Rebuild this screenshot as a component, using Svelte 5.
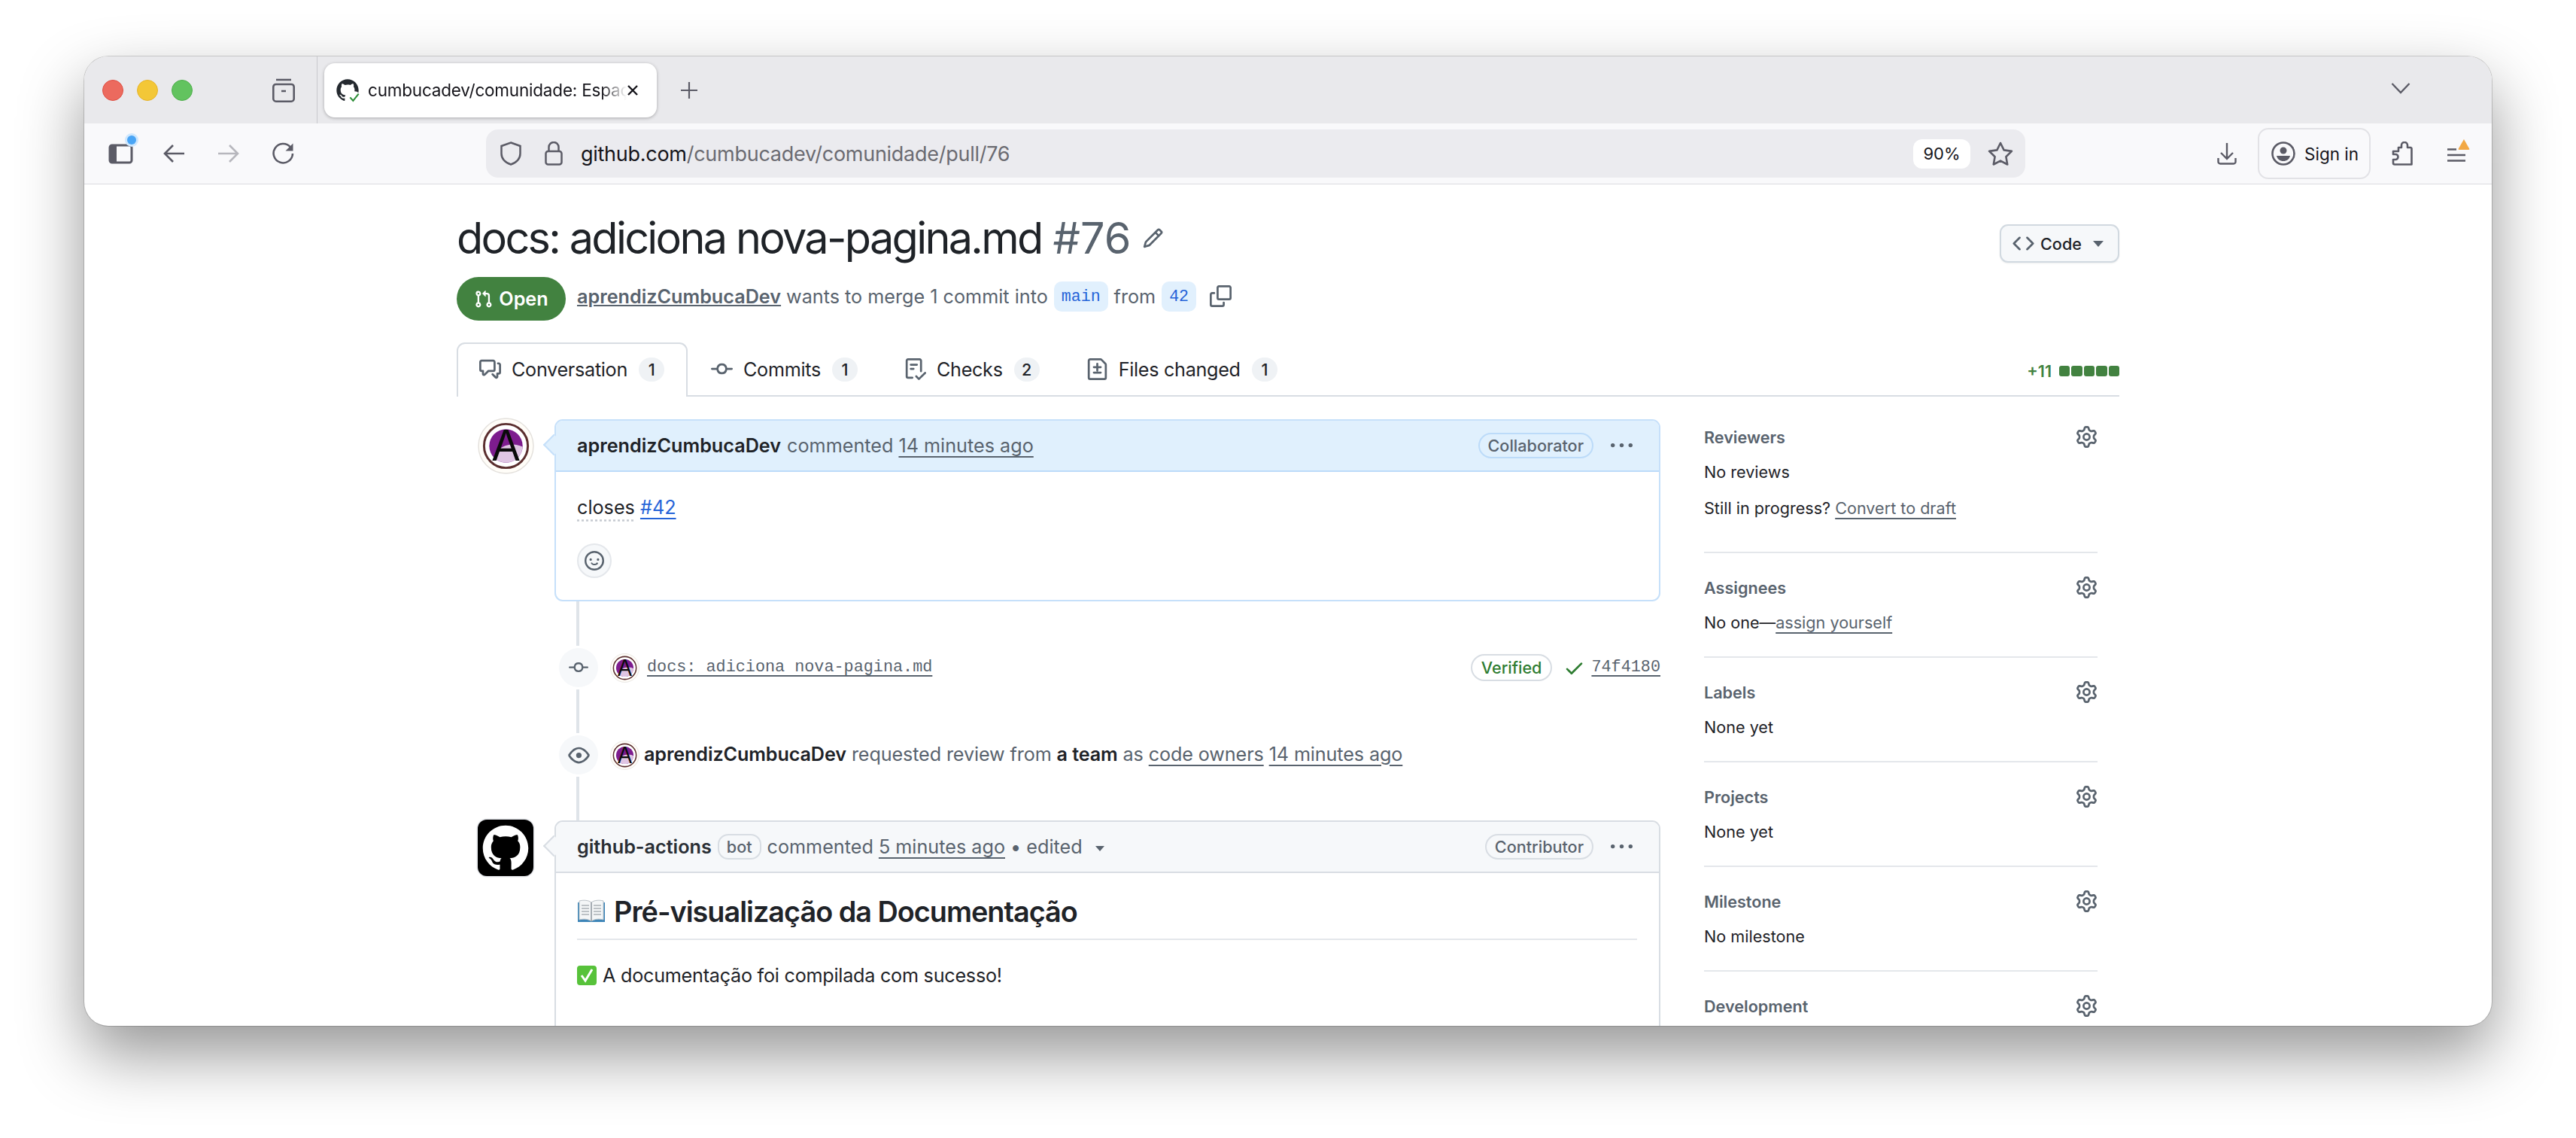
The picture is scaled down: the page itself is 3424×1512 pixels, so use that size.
<script>
	const oct = {
		pr: 'M1.5 3.25a2.25 2.25 0 1 1 3 2.122v5.256a2.251 2.251 0 1 1-1.5 0V5.372A2.25 2.25 0 0 1 1.5 3.25Zm5.677-.177L9.573.677A.25.25 0 0 1 10 .854V2.5h1A2.5 2.5 0 0 1 13.5 5v5.628a2.251 2.251 0 1 1-1.5 0V5a1 1 0 0 0-1-1h-1v1.646a.25.25 0 0 1-.427.177L7.177 3.427a.25.25 0 0 1 0-.354ZM3.75 2.5a.75.75 0 1 0 0 1.5.75.75 0 0 0 0-1.5Zm0 9.5a.75.75 0 1 0 0 1.5.75.75 0 0 0 0-1.5Zm8.25.75a.75.75 0 1 0 1.5 0 .75.75 0 0 0-1.5 0Z',
		discussion: 'M1.75 1h8.5c.966 0 1.75.784 1.75 1.75v5.5A1.75 1.75 0 0 1 10.25 10H7.061l-2.574 2.573A1.458 1.458 0 0 1 2 11.543V10h-.25A1.75 1.75 0 0 1 0 8.25v-5.5C0 1.784.784 1 1.75 1ZM1.5 2.75v5.5c0 .138.112.25.25.25h1a.75.75 0 0 1 .75.75v2.19l2.72-2.72a.749.749 0 0 1 .53-.22h3.5a.25.25 0 0 0 .25-.25v-5.5a.25.25 0 0 0-.25-.25h-8.5a.25.25 0 0 0-.25.25Zm13 2a.25.25 0 0 0-.25-.25h-.5a.75.75 0 0 1 0-1.5h.5c.966 0 1.75.784 1.75 1.75v5.5A1.75 1.75 0 0 1 14.25 12H14v1.543a1.458 1.458 0 0 1-2.487 1.03L9.22 12.28a.749.749 0 0 1 .326-1.275.749.749 0 0 1 .734.215l2.22 2.22v-2.19a.75.75 0 0 1 .75-.75h1a.25.25 0 0 0 .25-.25Z',
		commit: 'M11.93 8.5a4.002 4.002 0 0 1-7.86 0H.75a.75.75 0 0 1 0-1.5h3.32a4.002 4.002 0 0 1 7.86 0h3.32a.75.75 0 0 1 0 1.5Zm-1.43-.75a2.5 2.5 0 1 0-5 0 2.5 2.5 0 0 0 5 0Z',
		checklist: 'M2.5 1.75v11.5c0 .138.112.25.25.25h3.17a.75.75 0 0 1 0 1.5H2.75A1.75 1.75 0 0 1 1 13.25V1.75C1 .784 1.784 0 2.75 0h8.5C12.216 0 13 .784 13 1.75v7.736a.75.75 0 0 1-1.5 0V1.75a.25.25 0 0 0-.25-.25h-8.5a.25.25 0 0 0-.25.25Zm13.274 9.537v-.001l-4.557 4.45a.75.75 0 0 1-1.055-.008l-1.943-1.95a.75.75 0 0 1 1.062-1.058l1.419 1.425 4.026-3.932a.75.75 0 1 1 1.048 1.074ZM4.75 4h4.5a.75.75 0 0 1 0 1.5h-4.5a.75.75 0 0 1 0-1.5ZM4 7.75A.75.75 0 0 1 4.75 7h2a.75.75 0 0 1 0 1.5h-2A.75.75 0 0 1 4 7.75Z',
		diff: 'M1 1.75C1 .784 1.784 0 2.75 0h7.586c.464 0 .909.184 1.237.513l2.914 2.914c.329.328.513.773.513 1.237v9.586A1.75 1.75 0 0 1 13.25 16H2.75A1.75 1.75 0 0 1 1 14.25Zm1.75-.25a.25.25 0 0 0-.25.25v12.5c0 .138.112.25.25.25h10.5a.25.25 0 0 0 .25-.25V4.664a.25.25 0 0 0-.073-.177l-2.914-2.914a.25.25 0 0 0-.177-.073ZM8 3.25a.75.75 0 0 1 .75.75v1.75h1.75a.75.75 0 0 1 0 1.5H8.75V9a.75.75 0 0 1-1.5 0V7.25H5.5a.75.75 0 0 1 0-1.5h1.75V4A.75.75 0 0 1 8 3.25Zm-2.5 8a.75.75 0 0 1 0-1.5h5a.75.75 0 0 1 0 1.5Z',
		code: 'm11.28 3.22 4.25 4.25a.75.75 0 0 1 0 1.06l-4.25 4.25a.749.749 0 0 1-1.275-.326.749.749 0 0 1 .215-.734L13.94 8l-3.72-3.72a.749.749 0 0 1 .326-1.275.749.749 0 0 1 .734.215Zm-6.56 0a.751.751 0 0 1 1.042.018.751.751 0 0 1 .018 1.042L2.06 8l3.72 3.72a.749.749 0 0 1-.326 1.275.749.749 0 0 1-.734-.215L.47 8.53a.75.75 0 0 1 0-1.06Z',
		pencil: 'M11.013 1.427a1.75 1.75 0 0 1 2.474 0l1.086 1.086a1.75 1.75 0 0 1 0 2.474l-8.61 8.61c-.21.21-.47.364-.756.445l-3.251.93a.75.75 0 0 1-.927-.928l.929-3.25c.081-.286.235-.547.445-.758l8.61-8.61Zm.176 4.823L9.75 4.81l-6.286 6.287a.253.253 0 0 0-.064.108l-.558 1.953 1.953-.558a.253.253 0 0 0 .108-.064Zm1.238-3.763a.25.25 0 0 0-.354 0L10.811 3.75l1.439 1.44 1.263-1.263a.25.25 0 0 0 0-.354Z',
		copy: 'M0 6.75C0 5.784.784 5 1.75 5h1.5a.75.75 0 0 1 0 1.5h-1.5a.25.25 0 0 0-.25.25v7.5c0 .138.112.25.25.25h7.5a.25.25 0 0 0 .25-.25v-1.5a.75.75 0 0 1 1.5 0v1.5A1.75 1.75 0 0 1 9.25 16h-7.5A1.75 1.75 0 0 1 0 14.25Z M5 1.75C5 .784 5.784 0 6.75 0h7.5C15.216 0 16 .784 16 1.75v7.5A1.75 1.75 0 0 1 14.25 11h-7.5A1.75 1.75 0 0 1 5 9.25Zm1.75-.25a.25.25 0 0 0-.25.25v7.5c0 .138.112.25.25.25h7.5a.25.25 0 0 0 .25-.25v-7.5a.25.25 0 0 0-.25-.25Z',
		smiley: 'M8 0a8 8 0 1 1 0 16A8 8 0 0 1 8 0ZM1.5 8a6.5 6.5 0 1 0 13 0 6.5 6.5 0 0 0-13 0Zm3.82 1.636a.75.75 0 0 1 1.038.175l.007.009c.103.118.22.222.35.31.264.178.683.37 1.285.37.602 0 1.02-.192 1.285-.371.13-.088.247-.192.35-.31l.007-.008a.75.75 0 0 1 1.222.87c-.16.166-.338.316-.53.445-.63.418-1.37.638-2.127.629-.946 0-1.652-.308-2.126-.63a3.331 3.331 0 0 1-.715-.657.75.75 0 0 1 .183-1.044ZM12 7a1 1 0 1 1-2 0 1 1 0 0 1 2 0ZM5 8a1 1 0 1 1 0-2 1 1 0 0 1 0 2Z',
		eye: 'M8 2c1.981 0 3.671.992 4.933 2.078 1.27 1.091 2.187 2.345 2.637 3.023a1.62 1.62 0 0 1 0 1.798c-.45.678-1.367 1.932-2.637 3.023C11.67 13.008 9.981 14 8 14c-1.981 0-3.671-.992-4.933-2.078C1.797 10.83.88 9.576.43 8.898a1.62 1.62 0 0 1 0-1.798c.45-.677 1.367-1.931 2.637-3.022C4.33 2.992 6.019 2 8 2ZM1.679 7.932a.12.12 0 0 0 0 .136c.411.622 1.241 1.75 2.366 2.717C5.176 11.758 6.527 12.5 8 12.5c1.473 0 2.825-.742 3.955-1.715 1.124-.967 1.954-2.096 2.366-2.717a.12.12 0 0 0 0-.136c-.412-.621-1.242-1.75-2.366-2.717C10.824 4.242 9.473 3.5 8 3.5c-1.473 0-2.825.742-3.955 1.715-1.124.967-1.954 2.096-2.366 2.717ZM8 10a2 2 0 1 1-.001-3.999A2 2 0 0 1 8 10Z',
		check: 'M13.78 4.22a.75.75 0 0 1 0 1.06l-7.25 7.25a.75.75 0 0 1-1.06 0L2.22 9.28a.751.751 0 0 1 .018-1.042.751.751 0 0 1 1.042-.018L6 10.94l6.72-6.72a.75.75 0 0 1 1.06 0Z',
		kebab: 'M8 9a1.5 1.5 0 1 0 0-3 1.5 1.5 0 0 0 0 3ZM1.5 9a1.5 1.5 0 1 0 0-3 1.5 1.5 0 0 0 0 3Zm13 0a1.5 1.5 0 1 0 0-3 1.5 1.5 0 0 0 0 3Z',
		gear: 'M8 0a8.2 8.2 0 0 1 .701.031C9.444.095 9.99.645 10.16 1.29l.288 1.107c.018.066.079.158.212.224.231.114.454.243.668.386.123.082.233.09.299.071l1.103-.303c.644-.176 1.392.021 1.82.63.27.385.506.792.704 1.218.315.675.111 1.422-.364 1.891l-.814.806c-.049.048-.098.147-.088.294.016.257.016.515 0 .772-.01.147.038.246.088.294l.814.806c.475.469.679 1.216.364 1.891a7.977 7.977 0 0 1-.704 1.217c-.428.61-1.176.807-1.82.63l-1.102-.302c-.067-.019-.177-.011-.3.071a5.909 5.909 0 0 1-.668.386c-.133.066-.194.158-.211.224l-.29 1.106c-.168.646-.715 1.196-1.458 1.26a8.006 8.006 0 0 1-1.402 0c-.743-.064-1.289-.614-1.458-1.26l-.289-1.106c-.018-.066-.079-.158-.212-.224a5.738 5.738 0 0 1-.668-.386c-.123-.082-.233-.09-.299-.071l-1.103.303c-.644.176-1.392-.021-1.82-.63a8.12 8.12 0 0 1-.704-1.218c-.315-.675-.111-1.422.363-1.891l.815-.806c.05-.048.098-.147.088-.294a6.214 6.214 0 0 1 0-.772c.01-.147-.038-.246-.088-.294l-.815-.806C.635 6.045.431 5.298.746 4.623a7.92 7.92 0 0 1 .704-1.217c.428-.61 1.176-.807 1.82-.63l1.102.302c.067.019.177.011.3-.071.214-.143.437-.272.668-.386.133-.066.194-.158.211-.224l.29-1.106C6.009.645 6.556.095 7.299.03 7.53.01 7.764 0 8 0Zm-.571 1.525c-.036.003-.108.036-.137.146l-.289 1.105c-.147.561-.549.967-.998 1.189-.173.086-.34.183-.5.29-.417.278-.97.423-1.529.27l-1.103-.303c-.109-.03-.175.016-.195.045-.22.312-.412.644-.573.99-.014.031-.021.11.059.19l.815.806c.411.406.562.957.53 1.456a4.709 4.709 0 0 0 0 .582c.032.499-.119 1.05-.53 1.456l-.815.806c-.081.08-.073.159-.059.19.162.346.353.677.573.989.02.03.085.076.195.046l1.102-.303c.56-.153 1.113-.008 1.53.27.161.107.328.204.501.29.447.222.85.629.997 1.189l.289 1.105c.029.109.101.143.137.146a6.6 6.6 0 0 0 1.142 0c.036-.003.108-.036.137-.146l.289-1.105c.147-.561.549-.967.998-1.189.173-.086.34-.183.5-.29.417-.278.97-.423 1.529-.27l1.103.303c.109.029.175-.016.195-.045.22-.313.411-.644.573-.99.014-.031.021-.11-.059-.19l-.815-.806c-.411-.406-.562-.957-.53-1.456a4.709 4.709 0 0 0 0-.582c-.032-.499.119-1.05.53-1.456l.815-.806c.081-.08.073-.159.059-.19a6.464 6.464 0 0 0-.573-.989c-.02-.03-.085-.076-.195-.046l-1.102.303c-.56.153-1.113.008-1.53-.27a4.44 4.44 0 0 0-.501-.29c-.447-.222-.85-.629-.997-1.189l-.289-1.105c-.029-.11-.101-.143-.137-.146a6.6 6.6 0 0 0-1.142 0ZM11 8a3 3 0 1 1-6 0 3 3 0 0 1 6 0ZM9.5 8a1.5 1.5 0 1 0-3.001.001A1.5 1.5 0 0 0 9.5 8Z'
	};
	const markGithub =
		'M12 1C5.923 1 1 5.923 1 12c0 4.867 3.149 8.979 7.521 10.436.55.096.756-.233.756-.522 0-.262-.013-1.128-.013-2.049-2.764.509-3.479-.674-3.699-1.292-.124-.317-.66-1.293-1.127-1.554-.385-.207-.936-.715-.014-.729.866-.014 1.485.797 1.691 1.128.99 1.663 2.571 1.196 3.204.907.096-.715.385-1.196.701-1.471-2.448-.275-5.005-1.224-5.005-5.432 0-1.196.426-2.186 1.128-2.956-.111-.275-.496-1.402.11-2.915 0 0 .921-.288 3.024 1.128a10.193 10.193 0 0 1 2.75-.371c.936 0 1.871.123 2.75.371 2.104-1.43 3.025-1.128 3.025-1.128.605 1.513.221 2.64.111 2.915.701.77 1.127 1.747 1.127 2.956 0 4.222-2.571 5.157-5.019 5.432.399.344.743 1.004.743 2.035 0 1.471-.014 2.654-.014 3.025 0 .289.206.632.756.522C19.851 20.979 23 16.854 23 12c0-6.077-4.922-11-11-11Z';

	const tabs = [
		{ label: 'Conversation', count: 1, icon: 'discussion', selected: true },
		{ label: 'Commits', count: 1, icon: 'commit' },
		{ label: 'Checks', count: 2, icon: 'checklist' },
		{ label: 'Files changed', count: 1, icon: 'diff' }
	];

	const sideBlocks = [
		{ title: 'Labels', text: 'None yet' },
		{ title: 'Projects', text: 'None yet' },
		{ title: 'Milestone', text: 'No milestone' }
	];
</script>

{#snippet icon(name, size, cls = '')}
	<svg class={cls} width={size} height={size} viewBox="0 0 16 16" fill="currentColor"><path d={oct[name]} /></svg>
{/snippet}

{#snippet avatarA(size)}
	<svg class="avatar-a" width={size} height={size} viewBox="0 0 76 76">
		<defs>
			<clipPath id="disc-{size}"><circle cx="38" cy="38" r="22.500" /></clipPath>
		</defs>
		<circle cx="38" cy="38" r="37" fill="#fffdf8" stroke="#e4e1dd" stroke-width="1.500" />
		<circle cx="38" cy="38" r="29.500" fill="#fff" stroke="#5b2f2f" stroke-width="3" />
		<circle cx="38" cy="38" r="22.500" fill="#7d1c8e" />
		<g clip-path="url(#disc-{size})">
			<ellipse cx="47" cy="58" rx="26" ry="22" fill="#dfc5e3" />
		</g>
		<text x="38" y="58" text-anchor="middle" font-family="Liberation Sans, sans-serif" font-size="60" textLength="37" lengthAdjust="spacingAndGlyphs" fill="#0a0a0a">A</text>
	</svg>
{/snippet}

<div class="shot">
	<div class="window">
		<!-- barra de abas -->
		<div class="tabstrip">
			<div class="lights">
				<span class="light red"></span>
				<span class="light yellow"></span>
				<span class="light green"></span>
			</div>
			<svg class="tabs-btn" width="32" height="32" viewBox="0 0 32 32" fill="none" stroke="#5b5b66" stroke-width="2.6">
				<path d="M6 2h20" />
				<rect x="2.3" y="8" width="27.4" height="22.7" rx="3.5" />
				<path d="M13 17h6" />
			</svg>
			<div class="strip-sep"></div>
			<div class="browser-tab">
				<svg class="favicon" width="32" height="32" viewBox="0 0 24 24">
					<path fill="#24292f" d={markGithub} />
					<circle cx="19" cy="19" r="6" fill="#fff" />
					<path d="M14.5 19l3 3.4L23 15.5" fill="none" stroke="#2f8f3a" stroke-width="1.6" />
				</svg>
				<span class="browser-tab-title">cumbucadev/comunidade: Espaço da comunidade</span>
				<svg class="tab-x" width="16" height="16" viewBox="0 0 16 16" fill="none" stroke="#15141a" stroke-width="2.4"><path d="M2 2l12 12M14 2L2 14" /></svg>
			</div>
			<svg class="plus" width="24" height="24" viewBox="0 0 24 24" fill="none" stroke="#5b5b66" stroke-width="2.2"><path d="M12 1v22M1 12h22" /></svg>
			<svg class="list-all" width="26" height="16" viewBox="0 0 26 16" fill="none" stroke="#5b5b66" stroke-width="2.4"><path d="M1.5 2L13 14 24.500 2" /></svg>
		</div>

		<!-- barra de ferramentas -->
		<div class="toolbar">
			<div class="sidebar-btn">
				<svg width="34" height="28" viewBox="0 0 34 28" fill="none" stroke="#5b5b66">
					<rect x="2" y="3" width="29" height="23" rx="3" stroke-width="3" />
					<rect x="3" y="4" width="8" height="21" fill="#5b5b66" stroke="none" />
				</svg>
				<span class="blue-dot"></span>
			</div>
			<svg class="nav back" width="30" height="26" viewBox="0 0 30 26" fill="none" stroke="#5b5b66" stroke-width="2.6"><path d="M14 2L3 13l11 11M3 13h26" /></svg>
			<svg class="nav fwd" width="30" height="26" viewBox="0 0 30 26" fill="none" stroke="#b7b7bd" stroke-width="2.6"><path d="M16 2l11 11-11 11M27 13H1" /></svg>
			<svg class="nav reload" width="30" height="30" viewBox="0 0 30 30" fill="none" stroke="#5b5b66" stroke-width="2.6"><path d="M25 6.500A12.700 12.700 0 1 0 28 15" /><path d="M28.500 1.500v10h-10z" fill="#5b5b66" stroke="none" /></svg>

			<div class="urlbar">
				<svg class="shield" width="28" height="32" viewBox="0 0 28 32" fill="none" stroke="#5b5b66" stroke-width="2.5"><path d="M14 1.500L26.500 6v10c0 7-5.500 12-12.500 14.500C7 28 1.500 23 1.500 16V6z" /></svg>
				<svg class="lock" width="24" height="32" viewBox="0 0 24 32" fill="none" stroke="#5b5b66" stroke-width="2.5"><rect x="1.500" y="13" width="21" height="17.500" rx="3" /><path d="M5.500 13V7.500a6.500 6.500 0 0 1 13 0V13" /></svg>
				<span class="url"><span class="url-host">github.com</span>/cumbucadev/comunidade/pull/76</span>
				<span class="zoom-pill">90%</span>
				<svg class="star" width="34" height="32" viewBox="0 0 34 32" fill="none" stroke="#5b5b66" stroke-width="2.6" stroke-linejoin="round"><path d="M17 2l4.600 9.400 10.300 1.500-7.500 7.300 1.800 10.300-9.200-4.900-9.200 4.900 1.800-10.300L2.100 12.900l10.300-1.500z" /></svg>
			</div>

			<svg class="download" width="26" height="30" viewBox="0 0 26 30" fill="none" stroke="#5b5b66" stroke-width="2.4"><path d="M13 1v21M5 14l8 8 8-8M1.500 21v5a2.500 2.500 0 0 0 2.500 2.500h18a2.500 2.500 0 0 0 2.500-2.500v-5" /></svg>
			<div class="signin">
				<svg width="32" height="32" viewBox="0 0 32 32"><circle cx="16" cy="16" r="14.500" fill="none" stroke="#5b5b66" stroke-width="2.6" /><circle cx="16" cy="12" r="4.500" fill="#5b5b66" /><path d="M7 19h18c-1 4.500-4.500 7-9 7s-8-2.500-9-7z" fill="#5b5b66" /></svg>
				<span>Sign in</span>
			</div>
			<svg class="puzzle" width="28" height="32" viewBox="0 0 28 32" fill="none" stroke="#5b5b66" stroke-width="2.6" stroke-linejoin="round"><path d="M9 8h4V5a4 4 0 0 1 8 0v3h4a1.500 1.500 0 0 1 1.500 1.500V30.500H4A2 2 0 0 1 2 28.500V24h3a3.500 3.500 0 0 0 0-7H2v-4h7z" /></svg>
			<div class="menu-btn">
				<svg width="24" height="20" viewBox="0 0 24 20" fill="none" stroke="#5b5b66" stroke-width="2.6"><path d="M0 2.500h12M0 10h24M0 17.500h24" /></svg>
				<span class="menu-warn"></span>
			</div>
		</div>

		<!-- página -->
		<div class="page">
			<div class="head-row">
				<h1 class="pr-title">
					<span>docs: adiciona nova-pagina.md</span>
					<span class="pr-number">#76</span>
					{@render icon('pencil', 29, 'pr-pencil')}
				</h1>
				<button class="code-btn">
					{@render icon('code', 29, 'muted')}
					<span>Code</span>
					<span class="caret"></span>
				</button>
			</div>

			<div class="meta-row">
				<span class="state">{@render icon('pr', 25)} Open</span>
				<div class="meta-text">
					<a class="author" href="#a">aprendizCumbucaDev</a>
					<span>wants to merge 1 commit into</span>
					<span class="branch">main</span>
					<span>from</span>
					<span class="branch">42</span>
					{@render icon('copy', 29, 'copy-ic')}
				</div>
			</div>

			<div class="tabnav">
				{#each tabs as tab}
					<div class="tabnav-tab" class:selected={tab.selected}>
						{@render icon(tab.icon, 29, 'muted')}
						<span>{tab.label}</span>
						<span class="counter">{tab.count}</span>
					</div>
				{/each}
				<div class="diffstat">
					<span class="plus-count">+11</span>
					<span class="squares">
						{#each [1, 2, 3, 4, 5] as n (n)}
							<span class="sq"></span>
						{/each}
					</span>
				</div>
			</div>

			<div class="columns">
				<div class="discussion">
					<!-- comentário do autor -->
					<div class="comment-row">
						<div class="avatar-wrap">{@render avatarA(75)}</div>
						<div class="box blue">
							<div class="box-head">
								<b>aprendizCumbucaDev</b>
								<span class="muted">commented <a class="time" href="#t">14 minutes ago</a></span>
								<span class="role">Collaborator</span>
								{@render icon('kebab', 29, 'kebab')}
							</div>
							<div class="box-body">
								<p class="closes"><span class="dotted">closes</span> <a class="issue" href="#i">#42</a></p>
								<div class="react">{@render icon('smiley', 26)}</div>
							</div>
						</div>
					</div>

					<div class="stem"></div>
					<div class="event">
						<div class="badge">{@render icon('commit', 26)}</div>
						{@render avatarA(39)}
						<a class="commit-msg" href="#c">docs: adiciona nova-pagina.md</a>
						<span class="verified">Verified</span>
						{@render icon('check', 29, 'ci-check')}
						<a class="sha" href="#s">74f4180</a>
					</div>
					<div class="stem short"></div>
					<div class="event">
						<div class="badge">{@render icon('eye', 29)}</div>
						{@render avatarA(39)}
						<p class="event-text">
							<b>aprendizCumbucaDev</b> requested review from <b>a team</b> as
							<a class="time" href="#o">code owners</a> <a class="time" href="#t">14 minutes ago</a>
						</p>
					</div>
					<div class="stem short"></div>

					<!-- comentário do bot -->
					<div class="comment-row">
						<div class="avatar-wrap">
							<div class="bot-avatar">
								<svg width="66" height="66" viewBox="0 0 24 24"><circle cx="12" cy="12" r="10.800" fill="#000" /><path fill="#fff" d={markGithub} /></svg>
							</div>
						</div>
						<div class="box gray">
							<div class="box-head">
								<b class="bot-name">github-actions</b>
								<span class="bot-tag">bot</span>
								<span class="muted">commented <a class="time" href="#t">5 minutes ago</a> • edited</span>
								<span class="caret small"></span>
								<span class="role">Contributor</span>
								{@render icon('kebab', 29, 'kebab')}
							</div>
							<div class="box-body md">
								<h2>
									<svg width="38" height="32" viewBox="0 0 38 32">
										<path d="M1 4h36v26H1z" fill="#3d85b8" />
										<path d="M3 2c6-1.500 12-1 16 2 4-3 10-3.500 16-2v25c-6-1.500-12-1-16 2-4-3-10-3.500-16-2z" fill="#f4f6f7" stroke="#b9c0c6" stroke-width="1" />
										<path d="M19 4v25" stroke="#8d959c" stroke-width="1.500" />
										<path d="M6 8h10M6 12h10M6 16h10M6 20h10M22 8h10M22 12h10M22 16h10M22 20h10" stroke="#aab1b7" stroke-width="1.300" />
									</svg>
									Pré-visualização da Documentação
								</h2>
								<p class="ok">
									<svg width="26" height="26" viewBox="0 0 26 26">
										<rect width="26" height="26" rx="4" fill="#57c23a" />
										<path d="M6 13l5 7 9-15" fill="none" stroke="#fff" stroke-width="3" />
									</svg>
									A documentação foi compilada com sucesso!
								</p>
							</div>
						</div>
					</div>
				</div>

				<aside class="sidebar">
					<section class="side-block reviewers">
						<div class="side-title"><span>Reviewers</span>{@render icon('gear', 29, 'gear')}</div>
						<p class="side-text">No reviews</p>
						<p class="side-text second">Still in progress? <a class="side-link" href="#d">Convert to draft</a></p>
					</section>
					<section class="side-block">
						<div class="side-title"><span>Assignees</span>{@render icon('gear', 29, 'gear')}</div>
						<p class="side-text">No one—<a class="side-link" href="#y">assign yourself</a></p>
					</section>
					{#each sideBlocks as block}
						<section class="side-block">
							<div class="side-title"><span>{block.title}</span>{@render icon('gear', 29, 'gear')}</div>
							<p class="side-text">{block.text}</p>
						</section>
					{/each}
					<section class="side-block last">
						<div class="side-title"><span>Development</span>{@render icon('gear', 29, 'gear')}</div>
					</section>
				</aside>
			</div>
		</div>
	</div>
</div>

<style>
	:global(*, *::before, *::after) {
		box-sizing: border-box;
	}

	:global(body) {
		margin: 0;
		background: #fff;
		font-family: Inter, 'Liberation Sans', sans-serif;
		color: #1f2328;
	}

	p,
	h1,
	h2 {
		margin: 0;
	}

	a {
		color: inherit;
	}

	svg {
		flex-shrink: 0;
	}

	.shot {
		width: 3424px;
		height: 1512px;
		padding: 75px 112px 0;
		overflow: hidden;
	}

	.window {
		width: 3200px;
		height: 1288px;
		border-radius: 32px;
		overflow: hidden;
		background: #fff;
		box-shadow:
			0 38px 85px rgba(0, 0, 0, 0.42),
			0 0 0 1px rgba(0, 0, 0, 0.16);
	}

	/* barra de abas */
	.tabstrip {
		height: 89px;
		background: #e9e9ec;
		display: flex;
		align-items: center;
		padding-left: 24px;
		position: relative;
	}

	.lights {
		display: flex;
		gap: 18px;
	}

	.light {
		width: 28px;
		height: 28px;
		border-radius: 50%;
		border: 1px solid;
	}

	.red {
		background: #ec6a5e;
		border-color: #de4f43;
	}

	.yellow {
		background: #f3c737;
		border-color: #e6b32a;
	}

	.green {
		background: #62c35f;
		border-color: #4fae4c;
	}

	.tabs-btn {
		margin-left: 105px;
	}

	.strip-sep {
		width: 1px;
		height: 89px;
		background: #c9c9ce;
		margin-left: 28px;
	}

	.browser-tab {
		width: 442px;
		height: 72px;
		margin-left: 9px;
		background: #fff;
		border-radius: 14px;
		box-shadow: 0 1px 4px rgba(0, 0, 0, 0.28);
		display: flex;
		align-items: center;
		padding-left: 15px;
	}

	.favicon {
		margin-right: 11px;
	}

	.browser-tab-title {
		width: 344px;
		overflow: hidden;
		white-space: nowrap;
		font-size: 22.5px;
		letter-spacing: -0.2px;
		color: #15141a;
		mask-image: linear-gradient(to right, #000 90%, transparent 100%);
	}

	.plus {
		margin-left: 31px;
	}

	.list-all {
		margin-left: auto;
		margin-right: 108px;
		margin-top: -5px;
	}

	/* barra de ferramentas */
	.toolbar {
		height: 81px;
		background: #f9f9fb;
		border-bottom: 1px solid #dcdce0;
		display: flex;
		align-items: center;
		padding-left: 32px;
	}

	.sidebar-btn {
		position: relative;
		height: 28px;
	}

	.blue-dot {
		position: absolute;
		top: -10px;
		right: -3px;
		width: 12px;
		height: 12px;
		border-radius: 50%;
		background: #4aa5f5;
		box-shadow: 0 0 0 3px #cfe7fd;
	}

	.nav.back {
		margin-left: 38px;
	}

	.nav.fwd {
		margin-left: 43px;
	}

	.nav.reload {
		margin-left: 42px;
	}

	.urlbar {
		width: 2046px;
		height: 64px;
		margin-left: 255px;
		background: #ebebef;
		border-radius: 16px;
		display: flex;
		align-items: center;
		padding-left: 19px;
	}

	.lock {
		margin-left: 31px;
	}

	.url {
		margin-left: 24px;
		font-size: 27px;
		letter-spacing: -0.27px;
		color: #6b6b72;
	}

	.url-host {
		color: #15141a;
	}

	.zoom-pill {
		margin-left: auto;
		width: 76px;
		height: 39px;
		background: #fff;
		border-radius: 12px;
		display: flex;
		align-items: center;
		justify-content: center;
		font-size: 22px;
		color: #15141a;
	}

	.star {
		margin-left: 23px;
		margin-right: 16px;
	}

	.download {
		margin-left: 255px;
	}

	.signin {
		width: 150px;
		height: 68px;
		margin-left: 28px;
		border: 2px solid #e2e2e6;
		border-radius: 14px;
		display: flex;
		align-items: center;
		padding-left: 16px;
		gap: 12px;
		font-size: 22.5px;
		color: #15141a;
	}

	.puzzle {
		margin-left: 28px;
	}

	.menu-btn {
		position: relative;
		margin-left: 46px;
		height: 20px;
		margin-top: 4px;
	}

	.menu-warn {
		position: absolute;
		top: -11px;
		left: 14px;
		width: 16px;
		height: 14px;
		background: #f2a844;
		clip-path: polygon(50% 0, 100% 100%, 0 100%);
		border-radius: 2px;
	}

	/* cabeçalho do PR */
	.page {
		width: 2210px;
		margin-left: 495px;
		padding-top: 35px;
	}

	.head-row {
		display: flex;
		justify-content: space-between;
		align-items: flex-start;
	}

	.pr-title {
		font-size: 57.6px;
		font-weight: 400;
		line-height: 72px;
		letter-spacing: -2.7px;
		white-space: nowrap;
		display: flex;
		align-items: center;
		gap: 15px;
	}

	.pr-number {
		color: #59636e;
		letter-spacing: 0;
	}

	:global(.pr-pencil) {
		color: #59636e;
	}

	.code-btn {
		width: 159px;
		height: 51px;
		margin-top: 18px;
		background: #f6f8fa;
		border: 2px solid #d1d9e0;
		border-radius: 11px;
		box-shadow: 0 1px 2px rgba(31, 35, 40, 0.08);
		display: flex;
		align-items: center;
		padding: 0 0 0 15px;
		font-family: inherit;
		font-size: 21.6px;
		font-weight: 500;
		color: #1f2328;
		gap: 8px;
	}

	.caret {
		width: 0;
		height: 0;
		margin-left: 7px;
		border-left: 7px solid transparent;
		border-right: 7px solid transparent;
		border-top: 8px solid #59636e;
	}

	:global(.muted) {
		color: #59636e;
	}

	.meta-row {
		display: flex;
		align-items: center;
		margin-top: 16px;
		height: 58px;
	}

	.state {
		width: 145px;
		height: 58px;
		border-radius: 29px;
		background: #428240;
		color: #fff;
		font-size: 25.2px;
		font-weight: 600;
		display: flex;
		align-items: center;
		justify-content: center;
		gap: 8px;
	}

	.meta-text {
		margin-left: 15px;
		font-size: 25.2px;
		color: #59636e;
		display: flex;
		align-items: center;
		white-space: nowrap;
		gap: 8px;
		margin-top: -7px;
	}

	.author {
		font-weight: 600;
		margin-right: -1px;
	}

	.branch {
		font-family: 'Liberation Mono', monospace;
		font-size: 21.6px;
		color: #2563d8;
		background: #e1f0fd;
		border-radius: 10px;
		height: 40px;
		padding: 0 10px;
		display: flex;
		align-items: center;
	}

	:global(.copy-ic) {
		margin-left: 10px;
		color: #59636e;
	}

	/* abas */
	.tabnav {
		display: flex;
		align-items: flex-end;
		height: 72px;
		margin-top: 29px;
		border-bottom: 2px solid #d8dde3;
	}

	.tabnav-tab {
		height: 72px;
		display: flex;
		align-items: center;
		padding: 0 29px 3px 28px;
		border: 2px solid transparent;
		border-bottom: 0;
		font-size: 25.2px;
		letter-spacing: -0.3px;
		gap: 14px;
		margin-bottom: -2px;
		margin-right: 1px;
	}

	.tabnav-tab.selected {
		background: #fff;
		border-color: #d8dde3;
		border-radius: 11px 11px 0 0;
	}

	.counter {
		min-width: 34px;
		height: 32px;
		margin-left: 1px;
		border-radius: 16px;
		background: #eff2f5;
		display: flex;
		align-items: center;
		justify-content: center;
		font-size: 21.6px;
		font-weight: 500;
	}

	.diffstat {
		margin-left: auto;
		align-self: center;
		display: flex;
		align-items: center;
		gap: 10px;
		margin-top: 6px;
		font-size: 21.6px;
		font-weight: 600;
		color: #428240;
	}

	.squares {
		display: flex;
		gap: 2px;
	}

	.sq {
		width: 14.400px;
		height: 14.400px;
		border-radius: 3px;
		background: #428240;
	}

	/* colunas */
	.columns {
		display: grid;
		grid-template-columns: 1600px 1fr;
		gap: 58px;
	}

	.discussion {
		padding-top: 30px;
	}

	.comment-row {
		display: flex;
		align-items: flex-start;
	}

	.avatar-wrap {
		margin-left: 28px;
		margin-top: -2px;
		width: 75px;
		height: 75px;
		flex-shrink: 0;
	}

	.bot-avatar {
		width: 74px;
		height: 75px;
		margin-top: 1px;
		background: #000;
		border-radius: 12px;
		box-shadow: 0 0 0 1.500px #e4e6ea;
		display: flex;
		align-items: center;
		justify-content: center;
	}

	.box {
		width: 1470px;
		margin-left: 27px;
		border: 2px solid;
		border-radius: 11px;
		position: relative;
		background: #fff;
	}

	.box::before {
		content: '';
		position: absolute;
		left: -13px;
		top: 22px;
		width: 20px;
		height: 20px;
		transform: rotate(45deg);
		border-left: 2px solid;
		border-bottom: 2px solid;
		border-color: inherit;
		background: inherit;
	}

	.box.blue {
		border-color: #c6e0fa;
	}

	.box.blue::before {
		background: #e0f0fd;
	}

	.box.gray {
		border-color: #d8dde3;
		height: 400px;
	}

	.box.gray::before {
		background: #f6f8fa;
	}

	.box-head {
		position: relative;
		height: 68px;
		display: flex;
		align-items: center;
		padding: 0 35px 0 28px;
		font-size: 25.2px;
		gap: 8px;
		border-radius: 9px 9px 0 0;
		border-bottom: 2px solid;
	}

	.box-head b {
		font-weight: 600;
	}

	.blue .box-head {
		background: #e0f0fd;
		border-color: #bcdbf9;
	}

	.gray .box-head {
		background: #f6f8fa;
		border-color: #d8dde3;
	}

	.time {
		text-decoration: underline;
		text-underline-offset: 5px;
		text-decoration-thickness: 2px;
	}

	.role {
		margin-left: auto;
		height: 34px;
		padding: 0 11px;
		border-radius: 17px;
		border: 2px solid;
		font-size: 21.6px;
		font-weight: 500;
		color: #59636e;
		display: flex;
		align-items: center;
	}

	.blue .role {
		border-color: #bcdbf9;
	}

	.gray .role {
		border-color: #d8dde3;
	}

	:global(.kebab) {
		color: #59636e;
		margin-left: 15px;
	}

	.box-body {
		padding: 29px 28px 29px;
		font-size: 25.2px;
	}

	.closes {
		line-height: 36px;
	}

	.dotted {
		text-decoration: underline dotted #c5cad0;
		text-underline-offset: 7px;
	}

	.issue {
		color: #2563d8;
		text-decoration: underline;
		text-underline-offset: 5px;
		text-decoration-thickness: 2px;
	}

	.react {
		width: 46px;
		height: 46px;
		margin-top: 30px;
		border-radius: 50%;
		border: 2px solid #e4e7eb;
		background: #f6f8fa;
		color: #59636e;
		display: flex;
		align-items: center;
		justify-content: center;
	}

	/* linha do tempo */
	.stem {
		width: 4px;
		height: 59px;
		margin-left: 159px;
		background: #dfe4e9;
	}

	.stem.short {
		height: 58px;
	}

	.event {
		height: 58px;
		display: flex;
		align-items: center;
		padding-left: 136px;
		font-size: 25.2px;
		color: #59636e;
	}

	.badge {
		width: 52px;
		height: 52px;
		margin-right: 16px;
		border-radius: 50%;
		background: #f6f8fa;
		display: flex;
		align-items: center;
		justify-content: center;
	}

	.avatar-a {
		flex-shrink: 0;
	}

	.commit-msg {
		margin-left: 10px;
		margin-top: -2px;
		font-family: 'Liberation Mono', monospace;
		font-size: 21.800px;
		text-decoration: underline;
		text-underline-offset: 5px;
		text-decoration-thickness: 2px;
	}

	.verified {
		margin-left: auto;
		height: 36px;
		padding: 0 12px;
		border: 2px solid #d8dde3;
		border-radius: 18px;
		color: #2f7d32;
		font-size: 21.6px;
		font-weight: 500;
		display: flex;
		align-items: center;
	}

	:global(.ci-check) {
		color: #2f7d32;
		margin-left: 15px;
	}

	.sha {
		margin-left: 8px;
		margin-top: -2px;
		font-family: 'Liberation Mono', monospace;
		font-size: 21.800px;
		text-decoration: underline;
		text-underline-offset: 5px;
		text-decoration-thickness: 2px;
	}

	.event-text {
		margin-left: 6px;
		margin-top: -3px;
		white-space: nowrap;
		letter-spacing: -0.12px;
	}

	.event-text b {
		font-weight: 600;
		color: #1f2328;
	}

	/* corpo do bot */
	.bot-name {
		font-weight: 600;
		color: #2a2f35;
	}

	.bot-tag {
		height: 34px;
		padding: 0 10px;
		border: 2px solid #d8dde3;
		border-radius: 14px;
		font-size: 21.6px;
		font-weight: 500;
		color: #59636e;
		display: flex;
		align-items: center;
	}

	.caret.small {
		margin-left: 9px;
		margin-top: 4px;
		border-left-width: 6px;
		border-right-width: 6px;
		border-top-width: 7px;
	}

	.md {
		padding-top: 24px;
	}

	.md h2 {
		font-size: 37.800px;
		line-height: 54px;
		font-weight: 600;
		letter-spacing: -1px;
		padding-bottom: 9px;
		border-bottom: 2px solid #e4e7eb;
		width: 1409px;
		display: flex;
		align-items: center;
		gap: 11px;
	}

	.ok {
		margin-top: 29px;
		line-height: 36px;
		letter-spacing: -0.25px;
		display: flex;
		align-items: center;
		gap: 8px;
	}

	/* sidebar */
	.sidebar {
		padding-right: 29px;
	}

	.side-block {
		padding: 31px 0 27px;
		border-bottom: 2px solid #e4e7eb;
	}

	.side-block.reviewers {
		padding-top: 39px;
		padding-bottom: 40px;
	}

	.side-block.last {
		border-bottom: 0;
		padding-bottom: 0;
	}

	.side-title {
		height: 30px;
		display: flex;
		align-items: center;
		justify-content: space-between;
		font-size: 21.6px;
		font-weight: 600;
		color: #59636e;
	}

	:global(.gear) {
		color: #59636e;
		margin-bottom: 2px;
	}

	.side-text {
		margin-top: 13px;
		font-size: 21.6px;
		line-height: 36px;
	}

	.side-text.second {
		margin-top: 12px;
	}

	.side-link {
		color: #59636e;
		text-decoration: underline;
		text-underline-offset: 5px;
		text-decoration-thickness: 2px;
	}
</style>
